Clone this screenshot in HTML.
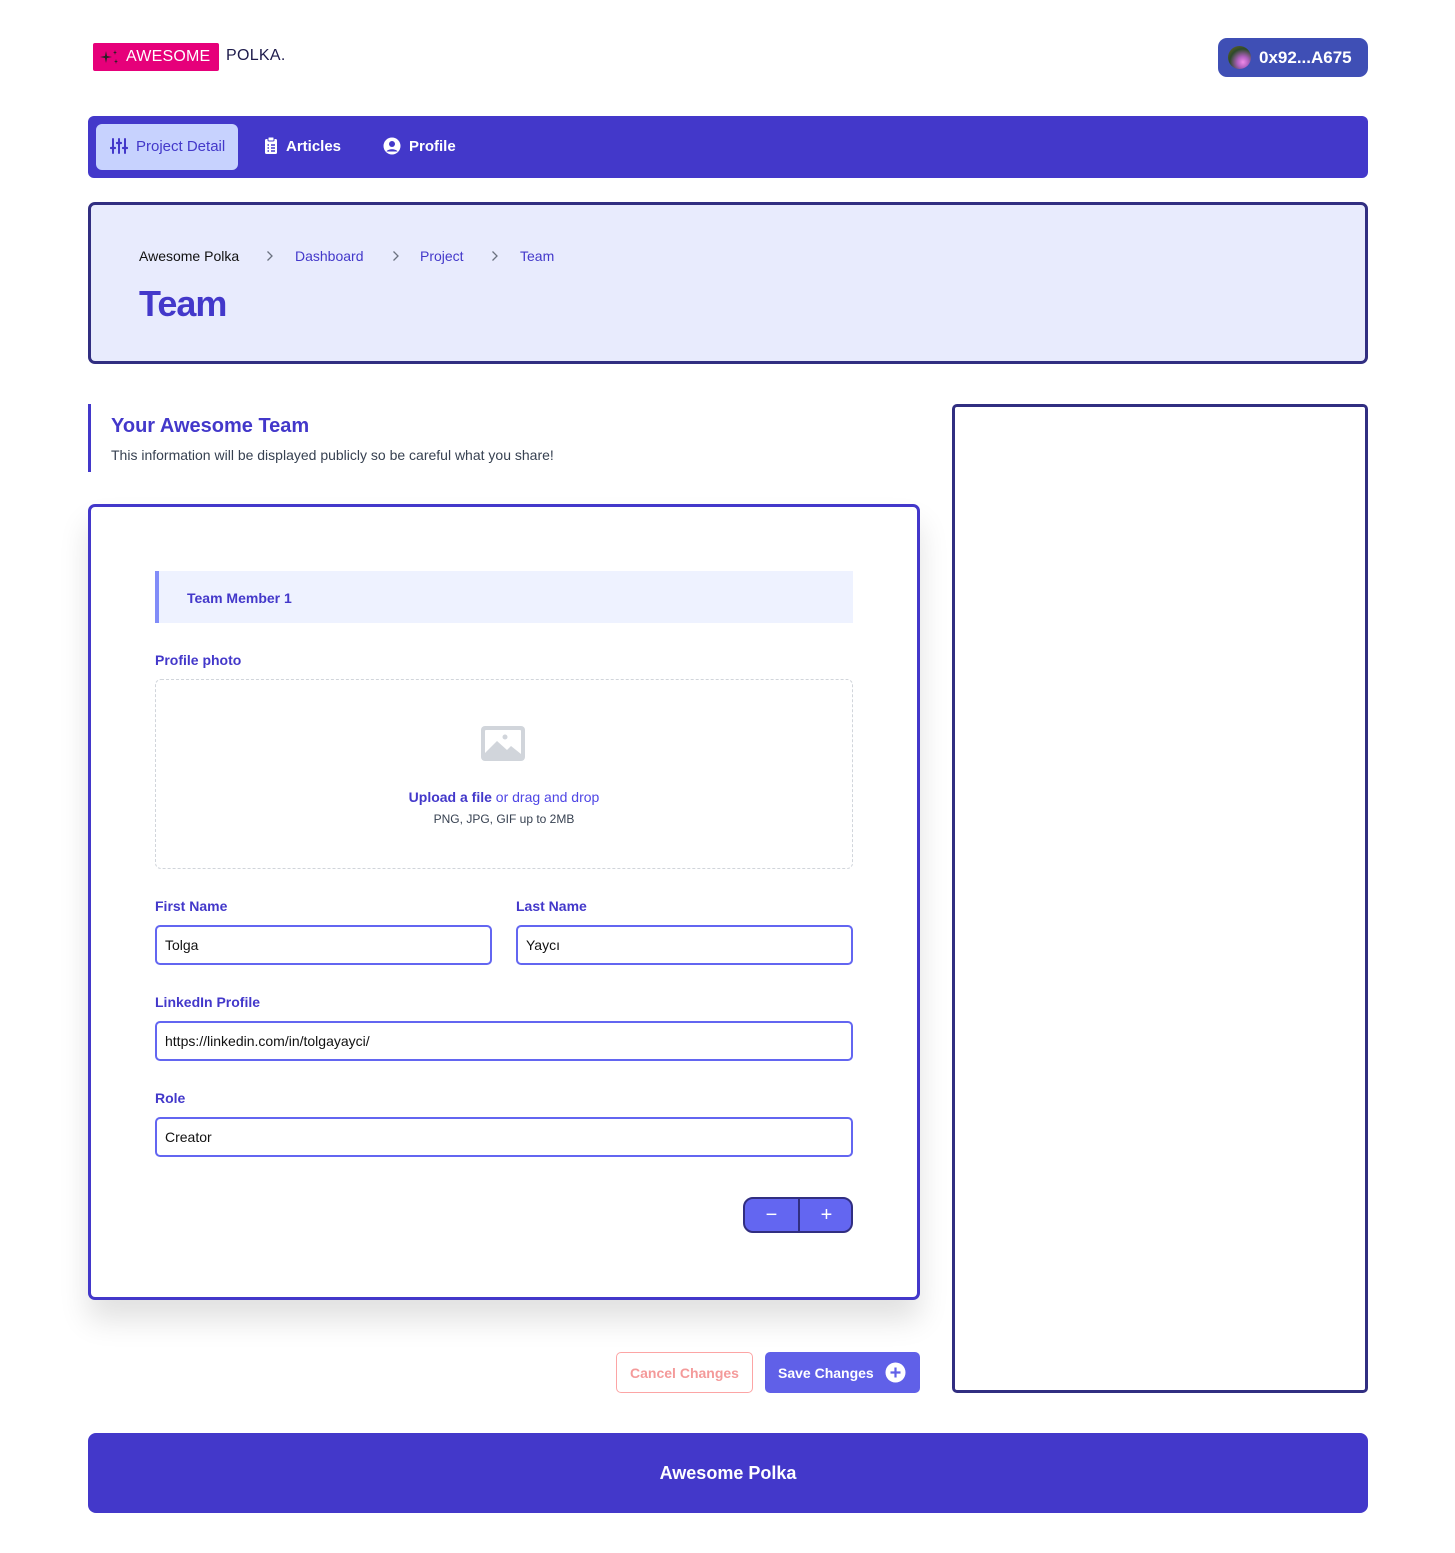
<!DOCTYPE html>
<html><head><meta charset="utf-8">
<style>
*{box-sizing:border-box;margin:0;padding:0}
body{width:1455px;height:1553px;background:#fff;font-family:"Liberation Sans",Arial,sans-serif;position:relative;overflow:hidden}
.abs{position:absolute}
.logo{left:93px;top:43px;width:126px;height:28px;background:#e6007a;border-radius:2px;color:#fff;font-size:16px;line-height:28px;padding-left:33px;letter-spacing:0.2px}
.polka{left:226px;top:47px;font-size:16px;color:#1e1b4b;letter-spacing:0.3px}
.wallet{left:1218px;top:38px;width:150px;height:39px;background:#3f4fb5;border-radius:9px;color:#fff;font-size:17px;font-weight:bold;line-height:39px;padding-left:41px}
.avatar{left:10px;top:8px;width:23px;height:23px;border-radius:50%;background:radial-gradient(circle at 65% 70%,#f08be8 0,#b060c0 25%,#2d4a2a 60%,#7a6a20 100%)}
.nav{left:88px;top:116px;width:1280px;height:62px;background:#4338ca;border-radius:6px}
.tab{position:absolute;top:8px;height:46px;line-height:46px;font-size:15px;font-weight:bold;color:#fff}
.tab svg{vertical-align:middle;margin-right:8px;margin-top:-3px}
.active{left:8px;width:142px;background:#c7d2fe;color:#4338ca;border-radius:6px;padding-left:14px;font-weight:normal}
.hdr{left:88px;top:202px;width:1280px;height:162px;background:#e8ebfd;border:3px solid #312e81;border-radius:7px}
.bc{position:absolute;top:43px;font-size:14px;color:#4338ca}
.chev{position:absolute;top:45px}
.title{left:48px;top:78px;font-size:36px;font-weight:bold;color:#4338ca;letter-spacing:-1px}
.sec{left:88px;top:404px;width:3px;height:68px;background:#4338ca}
.card{left:88px;top:504px;width:832px;height:796px;border:3px solid #4338ca;border-radius:7px;background:#fff;box-shadow:0 20px 30px rgba(0,0,0,0.12)}
.lbl{position:absolute;font-size:14px;font-weight:bold;color:#4338ca;left:155px}
.inp{position:absolute;height:40px;border:2px solid #6366f1;border-radius:5px;font-size:14px;color:#111;line-height:36px;padding-left:8px}
.right{left:952px;top:404px;width:416px;height:989px;border:3px solid #312e81;border-radius:5px}
.foot{left:88px;top:1433px;width:1280px;height:80px;background:#4338ca;border-radius:8px;color:#fff;font-size:18px;font-weight:bold;text-align:center;line-height:80px}
</style></head><body>
<div class="abs logo"><svg class="abs" style="left:6px;top:5px" width="22" height="18" viewBox="0 0 22 18"><path d="M7 3 L8 8 L13 9 L8 10 L7 15 L6 10 L1 9 L6 8Z" fill="#222"/><path d="M16 2 L16.5 4 L18 4.5 L16.5 5 L16 7 L15.5 5 L14 4.5 L15.5 4Z" fill="#222"/><path d="M17 11 L17.5 13 L19 13.5 L17.5 14 L17 16 L16.5 14 L15 13.5 L16.5 13Z" fill="#222"/></svg>AWESOME</div>
<div class="abs polka">POLKA.</div>
<div class="abs wallet"><div class="abs avatar"></div>0x92...A675</div>

<div class="abs nav">
 <div class="tab active"><svg width="18" height="16" viewBox="0 0 18 16" fill="none" stroke="#4338ca" stroke-width="2" stroke-linecap="round"><path d="M3 1v14M9 1v14M15 1v14"/><path d="M1 10h4M7 5h4M13 10h4" stroke-width="2.2"/></svg>Project Detail</div>
 <div class="tab" style="left:176px"><svg width="14" height="17" viewBox="0 0 14 17"><rect x="1" y="2" width="12" height="15" rx="1.5" fill="#fff"/><rect x="4" y="0" width="6" height="4" rx="1" fill="#fff" stroke="#4338ca" stroke-width="1"/><path d="M3.5 8h1.5M7 8h4M3.5 11h1.5M7 11h4M3.5 14h1.5M7 14h4" stroke="#4338ca" stroke-width="1.5"/></svg>Articles</div>
 <div class="tab" style="left:295px"><svg width="18" height="18" viewBox="0 0 18 18"><circle cx="9" cy="9" r="8.5" fill="#fff"/><circle cx="9" cy="7" r="3" fill="#4338ca"/><path d="M3.5 14.5c1.5-3 9.5-3 11 0" fill="#4338ca"/></svg>Profile</div>
</div>

<div class="abs hdr">
 <div class="bc" style="left:48px;color:#111">Awesome Polka</div>
 <svg class="chev" style="left:175px" width="8" height="12" viewBox="0 0 8 12"><path d="M1.5 1.5L6 6L1.5 10.5" fill="none" stroke="#6b7280" stroke-width="1.3"/></svg>
 <div class="bc" style="left:204px">Dashboard</div>
 <svg class="chev" style="left:301px" width="8" height="12" viewBox="0 0 8 12"><path d="M1.5 1.5L6 6L1.5 10.5" fill="none" stroke="#6b7280" stroke-width="1.3"/></svg>
 <div class="bc" style="left:329px">Project</div>
 <svg class="chev" style="left:400px" width="8" height="12" viewBox="0 0 8 12"><path d="M1.5 1.5L6 6L1.5 10.5" fill="none" stroke="#6b7280" stroke-width="1.3"/></svg>
 <div class="bc" style="left:429px">Team</div>
 <div class="abs title">Team</div>
</div>

<div class="abs sec"></div>
<div class="abs" style="left:111px;top:415px;font-size:20px;font-weight:bold;color:#4338ca">Your Awesome Team</div>
<div class="abs" style="left:111px;top:447px;font-size:14px;color:#374151">This information will be displayed publicly so be careful what you share!</div>

<div class="abs card"></div>
<div class="abs" style="left:155px;top:571px;width:698px;height:52px;background:#eef2ff;border-left:4px solid #818cf8;font-size:14px;font-weight:bold;color:#4338ca;line-height:54px;padding-left:28px">Team Member 1</div>
<div class="lbl" style="top:652px">Profile photo</div>
<div class="abs" style="left:155px;top:679px;width:698px;height:190px;border:1.5px dashed #d1d5db;border-radius:6px"></div>
<svg class="abs" style="left:481px;top:726px" width="44" height="35" viewBox="0 0 44 35"><rect x="0" y="0" width="44" height="35" rx="4" fill="#d1d5db"/><rect x="4" y="4" width="36" height="27" rx="1" fill="#fff"/><path d="M4 31 L4 27 L16 15 L26 24 L30 20 L40 28 L40 31Z" fill="#d1d5db"/><circle cx="24" cy="11" r="2.5" fill="#d1d5db"/></svg>
<div class="abs" style="left:155px;width:698px;top:789px;text-align:center;font-size:14px;color:#4f46e5"><b style="color:#4338ca">Upload a file</b> or drag and drop</div>
<div class="abs" style="left:155px;width:698px;top:812px;text-align:center;font-size:12px;color:#374151">PNG, JPG, GIF up to 2MB</div>

<div class="lbl" style="top:898px">First Name</div>
<div class="lbl" style="top:898px;left:516px">Last Name</div>
<div class="inp" style="left:155px;top:925px;width:337px">Tolga</div>
<div class="inp" style="left:516px;top:925px;width:337px">Yaycı</div>
<div class="lbl" style="top:994px">LinkedIn Profile</div>
<div class="inp" style="left:155px;top:1021px;width:698px">https://linkedin.com/in/tolgayayci/</div>
<div class="lbl" style="top:1090px">Role</div>
<div class="inp" style="left:155px;top:1117px;width:698px">Creator</div>

<div class="abs" style="left:743px;top:1197px;width:110px;height:36px;background:#6366f1;border:2px solid #312e81;border-radius:10px;color:#fff;font-size:20px;line-height:32px">
 <span class="abs" style="left:0;width:53px;text-align:center">−</span>
 <div class="abs" style="left:53px;top:0;width:2px;height:32px;background:#312e81"></div>
 <span class="abs" style="left:55px;width:53px;text-align:center">+</span>
</div>

<div class="abs" style="left:616px;top:1352px;width:137px;height:41px;border:1px solid #fca5a5;border-radius:5px;color:#f49a9a;font-size:14px;font-weight:bold;text-align:center;line-height:40px">Cancel Changes</div>
<div class="abs" style="left:765px;top:1352px;width:155px;height:41px;background:#6060e8;border-radius:5px;color:#fff;font-size:14px;font-weight:bold;line-height:42px;padding-left:13px">Save Changes<svg class="abs" style="left:120px;top:10px" width="21" height="21" viewBox="0 0 21 21"><circle cx="10.5" cy="10.5" r="10" fill="#fff"/><path d="M10.5 5.5v10M5.5 10.5h10" stroke="#6060e8" stroke-width="2.2"/></svg></div>

<div class="abs right"></div>
<div class="abs foot">Awesome Polka</div>
</body></html>
